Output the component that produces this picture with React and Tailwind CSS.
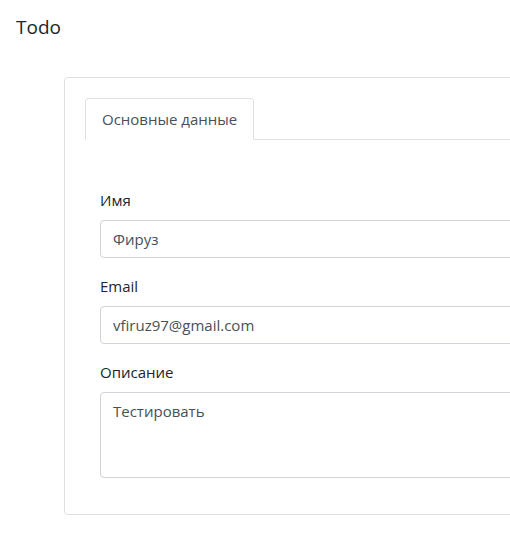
const fields = [
  { label: 'Имя', value: 'Фируз' },
  { label: 'Email', value: 'vfiruz97@gmail.com' },
];

export default function App() {
  return (
    <div className="w-[510px] h-[550px] overflow-hidden bg-white text-[#212529] font-['Segoe_UI','Open_Sans',sans-serif] text-[15px]">
      {/* Title */}
      <h1 className="pl-4 pt-[14px] text-[19px] leading-[27px]">Todo</h1>

      {/* Card */}
      <div className="ml-[64px] mt-[36px] w-[700px] border border-[#dfdfdf] rounded p-5">
        {/* Tabs */}
        <div className="flex border-b border-[#dee2e6]">
          <div className="-mb-px px-4 py-2 leading-6 text-[#495057] bg-white border border-[#dee2e6] border-b-white rounded-t">
            Основные данные
          </div>
        </div>

        {/* Pane */}
        <div className="pt-[48px] px-[15px]">
          {fields.map(f => (
            <div key={f.label} className="mb-4">
              <label className="block mb-2 leading-6">{f.label}</label>
              <input
                readOnly
                value={f.value}
                className="block w-full h-[38px] px-3 border border-[#ced4da] rounded text-[#495057] leading-6 outline-none"
              />
            </div>
          ))}
          <div className="mb-4">
            <label className="block mb-2 leading-6">Описание</label>
            <textarea
              readOnly
              rows={3}
              value="Тестировать"
              className="block w-full h-[86px] px-3 py-[6px] border border-[#ced4da] rounded text-[#495057] leading-6 resize-none outline-none"
            />
          </div>
        </div>
      </div>
    </div>
  );
}
